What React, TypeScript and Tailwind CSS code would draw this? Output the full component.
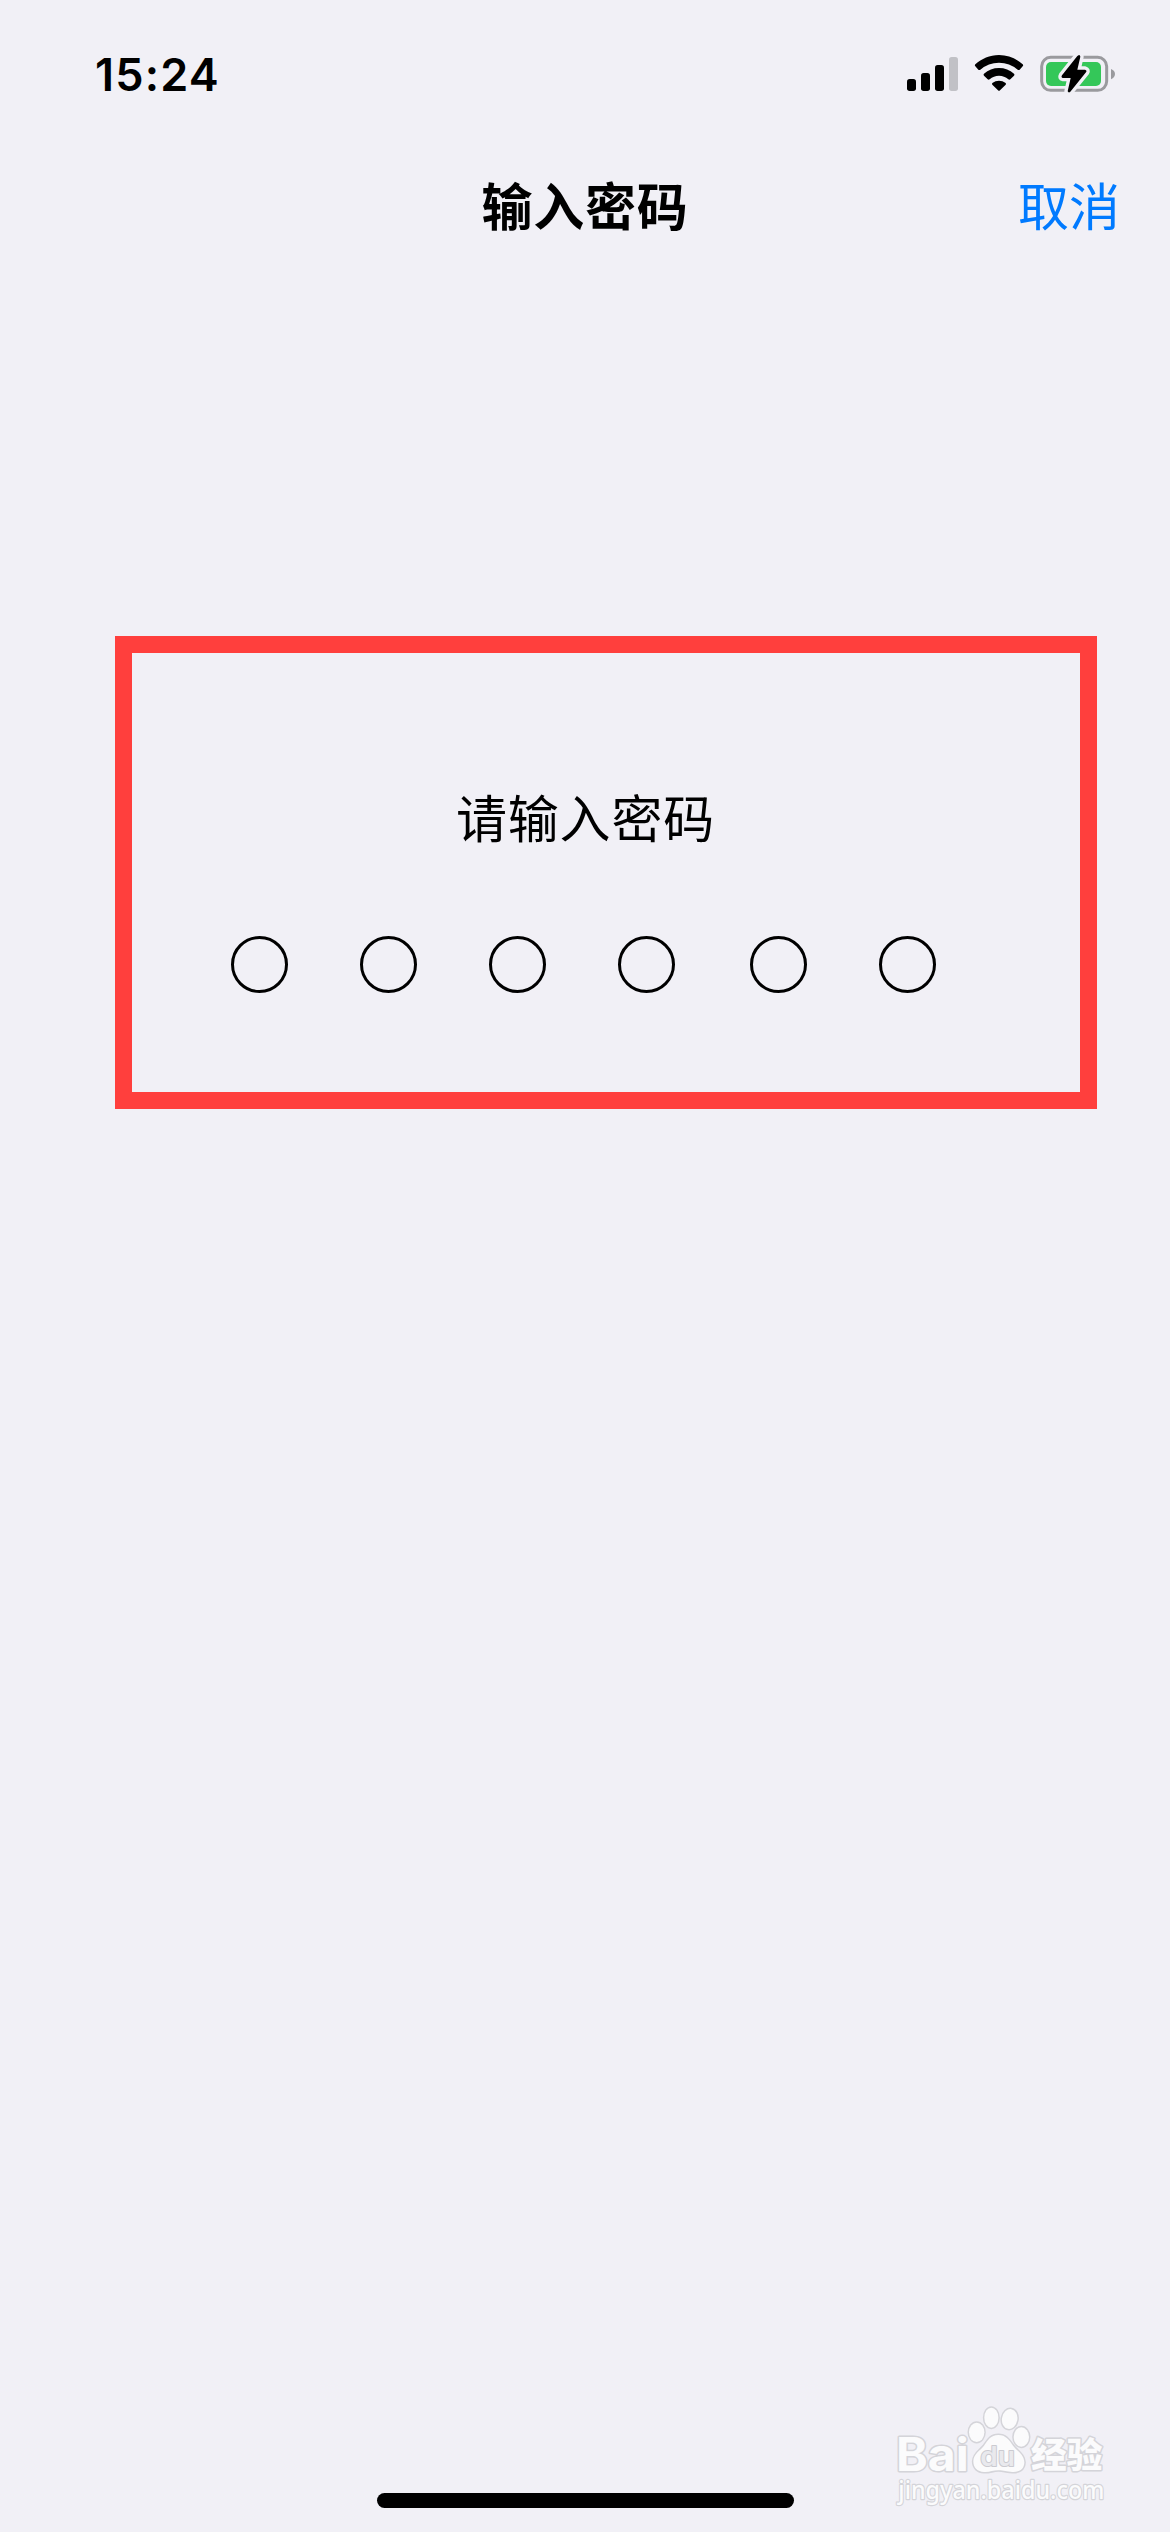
const latinBold = "font-['Inter',sans-serif]";

function StatusIcons() {
  return (
    <svg className="h-[70px] w-[240px]" viewBox="0 0 720 210" role="img" aria-label="信号、无线局域网、电池">
      <rect x="51" y="117" width="27" height="36" rx="8" />
      <rect x="93" y="99" width="27" height="54" rx="8" />
      <rect x="135" y="75" width="27" height="78" rx="8" />
      <rect x="177" y="51" width="27" height="102" rx="8" fill="#c1c1c6" />
      <path d="M327 45C355 45 379 56 398 73Q401 76 398 79L389 89Q386 91 383 89Q359 68 327 68Q295 68 271 89Q268 91 265 89L256 79Q253 76 256 73C275 56 299 45 327 45Z" />
      <path d="M327 84Q353 84 372 101Q375 104 372 107L361 118Q358 120 355 118Q343 107 327 107Q311 107 299 118Q296 120 293 118L282 107Q279 104 282 101Q301 84 327 84Z" />
      <path d="M327 122Q338 122 347 129Q349 132 347 134L330 151Q327 154 324 151L307 134Q305 132 307 129Q316 122 327 122Z" />
      <rect x="455" y="52" width="195" height="99" rx="27" fill="none" stroke="#9a9a9e" strokeWidth="9" />
      <path d="M663 87Q675 92 675 102T663 118Z" fill="#9a9a9e" />
      <rect x="468" y="66" width="165" height="72" rx="15" fill="#34c759" />
      <path
        d="M567 45Q571 45 571 50L562 89H585Q592 91 588 97L541 155Q536 160 533 154L542 114H519Q512 113 516 106L562 48Z"
        stroke="#f1f0f6"
        strokeWidth="20"
        strokeLinejoin="round"
        paintOrder="stroke"
      />
    </svg>
  );
}

function Watermark() {
  return (
    <svg className="h-[130px] w-[240px]" viewBox="0 0 720 390" role="img" aria-label="Baidu 经验">
      <g fill="#fbfbfc" stroke="#d4d4d9" strokeWidth="9" paintOrder="stroke" strokeLinejoin="round">
        <text x="48" y="243" fontSize="138" fontWeight="700" textLength="218" lengthAdjust="spacingAndGlyphs" className={latinBold}>Bai</text>
        <ellipse cx="290" cy="127" rx="23" ry="29" />
        <ellipse cx="334" cy="83" rx="21" ry="30" />
        <ellipse cx="389" cy="87" rx="23" ry="30" transform="rotate(10 389 87)" />
        <ellipse cx="424" cy="141" rx="23" ry="29" />
        <path d="M355 135C378 135 387 150 399 167C411 183 433 194 433 217C433 239 416 247 397 246C380 245 372 241 355 241C338 241 330 247 312 246C293 245 280 234 280 214C280 192 301 181 312 167C323 151 332 135 355 135Z" />
        <text x="301" y="227" fontSize="82" fontWeight="600" textLength="104" lengthAdjust="spacingAndGlyphs" fill="#e9e9ed" stroke="#cbcbd1" strokeWidth="6" className={latinBold}>du</text>
        <text x="453" y="235" fontSize="107" fontWeight="900" textLength="214" className="font-['Noto_Sans_CJK_SC',sans-serif]">经验</text>
        <text x="55" y="327" fontSize="74" strokeWidth="7" fontWeight="500" textLength="618" lengthAdjust="spacingAndGlyphs" className="font-['Noto_Sans',sans-serif]">jingyan.baidu.com</text>
      </g>
    </svg>
  );
}

const gaps = ["", "ml-[72px]", "ml-[72px]", "ml-[72px]", "ml-[75px]", "ml-[72px]"];

export default function App() {
  return (
    <main className="relative flex h-[2532px] w-[1170px] flex-col overflow-hidden bg-[#f1f0f6] font-['Inter','Noto_Sans_CJK_SC',sans-serif] text-black">
      <header className="flex h-[150px] items-start justify-between pt-[40px] pr-[40px] pl-[95px]">
        <time className="text-[45px] leading-[70px] font-semibold tracking-[1.2px]">15:24</time>
        <StatusIcons />
      </header>
      <nav className="grid h-[116px] grid-cols-[1fr_auto_1fr] items-center text-[51px] leading-[76px]">
        <span />
        <h1 className="text-[51px] font-bold tracking-[0.8px]">输入密码</h1>
        <button className="justify-self-end pr-[50px] font-normal text-[#007aff]">取消</button>
      </nav>
      <section className="mt-[370px] ml-[115px] h-[473px] w-[982px] border-[17px] border-[#ff3f3d]">
        <h2 className="mt-[129px] ml-[324px] text-[51px] leading-[76px] font-normal tracking-[0.8px]">请输入密码</h2>
        <div className="mt-[78px] ml-[99px] flex">
          {gaps.map((gap, i) => (
            <span key={i} className={`size-[57px] rounded-full border-3 border-black ${gap}`} />
          ))}
        </div>
      </section>
      <footer className="mt-auto flex h-[142px] flex-col items-center">
        <div className="mr-[50px] self-end">
          <Watermark />
        </div>
        <div className="-mt-[27px] h-[15px] w-[417px] shrink-0 rounded-full bg-black" />
      </footer>
    </main>
  );
}
